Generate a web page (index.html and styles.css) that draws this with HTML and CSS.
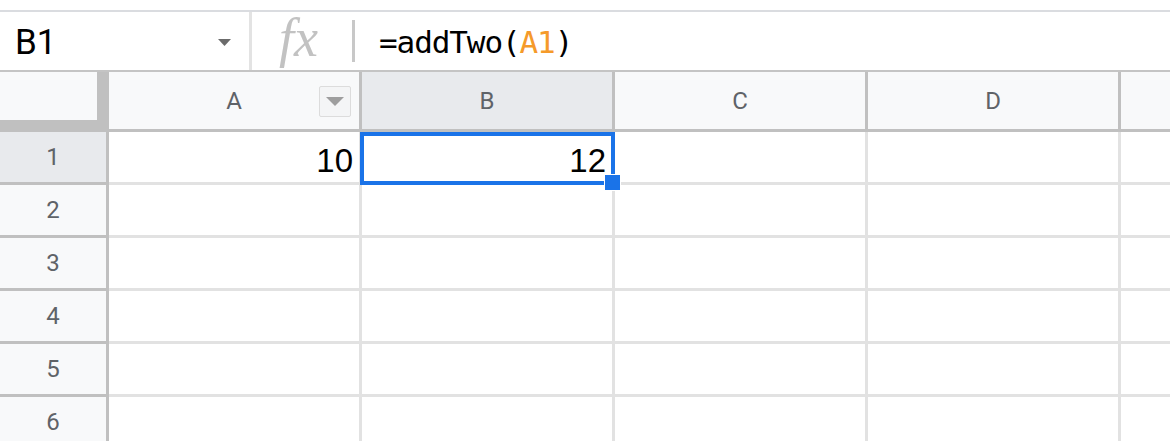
FILE: index.html
```html
<!DOCTYPE html>
<html>
<head>
<meta charset="utf-8">
<link rel="stylesheet" href="styles.css">
</head>
<body>
<div class="app">
  <div class="topstrip"></div>
  <div class="fbar">
    <div class="namebox">
      <span class="nb-text">B1</span>
      <svg class="nb-caret" width="13" height="7" viewBox="0 0 13 7"><path d="M0 0H13L6.5 7Z" fill="#6b6b6b"/></svg>
    </div>
    <div class="sep1"></div>
    <div class="fx">fx</div>
    <div class="sep2"></div>
    <div class="formula">=addTwo(<span class="ref">A1</span>)</div>
  </div>
  <div class="sheet">
    <div class="row hdr">
      <div class="corner"><div class="corner-in"></div></div>
      <div class="ch">A
        <div class="filter"><svg width="18" height="9" viewBox="0 0 18 9"><path d="M0 0H18L9 9Z" fill="#9e9e9e"/></svg></div>
      </div>
      <div class="ch sel">B</div>
      <div class="ch">C</div>
      <div class="ch">D</div>
      <div class="ch last"></div>
    </div>
    <div class="row">
      <div class="rh sel">1</div>
      <div class="c num">10</div>
      <div class="c num">12</div>
      <div class="c"></div>
      <div class="c"></div>
      <div class="c last"></div>
    </div>
    <div class="row">
      <div class="rh">2</div>
      <div class="c"></div><div class="c"></div><div class="c"></div><div class="c"></div><div class="c last"></div>
    </div>
    <div class="row">
      <div class="rh">3</div>
      <div class="c"></div><div class="c"></div><div class="c"></div><div class="c"></div><div class="c last"></div>
    </div>
    <div class="row">
      <div class="rh">4</div>
      <div class="c"></div><div class="c"></div><div class="c"></div><div class="c"></div><div class="c last"></div>
    </div>
    <div class="row">
      <div class="rh">5</div>
      <div class="c"></div><div class="c"></div><div class="c"></div><div class="c"></div><div class="c last"></div>
    </div>
    <div class="row">
      <div class="rh">6</div>
      <div class="c"></div><div class="c"></div><div class="c"></div><div class="c"></div><div class="c last"></div>
    </div>
    <div class="selection"></div>
    <div class="handle"></div>
  </div>
</div>
</body>
</html>
```

FILE: styles.css
```css
html, body {
  margin: 0;
  padding: 0;
  background: #fff;
}
.app {
  width: 1170px;
  height: 441px;
  overflow: hidden;
  font-family: Roboto, "Liberation Sans", Arial, sans-serif;
}
.topstrip {
  height: 10px;
  border-bottom: 2px solid #dadce0;
}
.fbar {
  height: 58px;
  border-bottom: 2px solid #c4c4c4;
  display: flex;
  align-items: center;
}
.namebox {
  width: 249px;
  height: 100%;
  box-sizing: border-box;
  padding-left: 15px;
  padding-right: 18px;
  display: flex;
  align-items: center;
  justify-content: space-between;
}
.nb-text {
  font-size: 35px;
  color: #000;
  line-height: 1;
  padding-top: 2px;
}
.nb-caret {
  margin-top: 3px;
}
.sep1 {
  width: 3px;
  height: 100%;
  background: #e3e3e3;
}
.fx {
  width: 100px;
  box-sizing: border-box;
  padding-left: 27px;
  font-family: "Liberation Serif", "Times New Roman", serif;
  font-style: italic;
  font-size: 54px;
  color: #c2c2c2;
  line-height: 1;
  margin-top: -6px;
}
.sep2 {
  width: 3px;
  height: 42px;
  background: #c8c8c8;
}
.formula {
  padding-left: 24px;
  font-family: "DejaVu Sans Mono", "Liberation Mono", monospace;
  font-size: 31px;
  letter-spacing: -1.1px;
  color: #000;
  line-height: 1;
  padding-top: 2px;
}
.ref {
  color: #f59a2a;
}
.sheet {
  position: relative;
}
.row {
  display: flex;
  height: 53px;
}
.row.hdr {
  height: 60px;
}
.corner {
  width: 109px;
  height: 60px;
  flex: none;
  background: #c0c0c0;
}
.corner-in {
  width: 97px;
  height: 48px;
  background: #f8f9fa;
}
.ch {
  position: relative;
  width: 253px;
  flex: none;
  box-sizing: border-box;
  border-right: 3px solid #c0c0c0;
  border-bottom: 3px solid #c0c0c0;
  background: #f8f9fa;
  color: #5f6368;
  font-size: 24px;
  display: flex;
  align-items: center;
  justify-content: center;
}
.ch.sel {
  background: #e8eaed;
}
.ch.last, .c.last {
  width: 60px;
  border-right: none;
}
.filter {
  position: absolute;
  right: 8px;
  top: 14px;
  width: 30px;
  height: 29px;
  border: 1px solid #dcdcdc;
  border-radius: 2px;
  background: #f4f5f6;
  display: flex;
  align-items: center;
  justify-content: center;
}
.rh {
  width: 109px;
  flex: none;
  box-sizing: border-box;
  border-right: 3px solid #c0c0c0;
  border-bottom: 3px solid #c0c0c0;
  background: #f8f9fa;
  color: #5f6368;
  font-size: 24px;
  display: flex;
  align-items: center;
  justify-content: center;
}
.rh.sel {
  background: #e8eaed;
}
.c {
  width: 253px;
  flex: none;
  box-sizing: border-box;
  border-right: 3px solid #e2e2e2;
  border-bottom: 3px solid #e2e2e2;
}
.num {
  font-family: "Liberation Sans", Arial, sans-serif;
  font-size: 33px;
  line-height: 1;
  color: #000;
  display: flex;
  align-items: flex-end;
  justify-content: flex-end;
  padding-right: 6px;
  padding-bottom: 5px;
}
.selection {
  position: absolute;
  left: 360px;
  top: 60px;
  width: 255px;
  height: 53px;
  box-sizing: border-box;
  border: 4px solid #1a73e8;
}
.handle {
  position: absolute;
  left: 604px;
  top: 102px;
  width: 15px;
  height: 15px;
  background: #1a73e8;
  border: 1px solid #fff;
}
```
